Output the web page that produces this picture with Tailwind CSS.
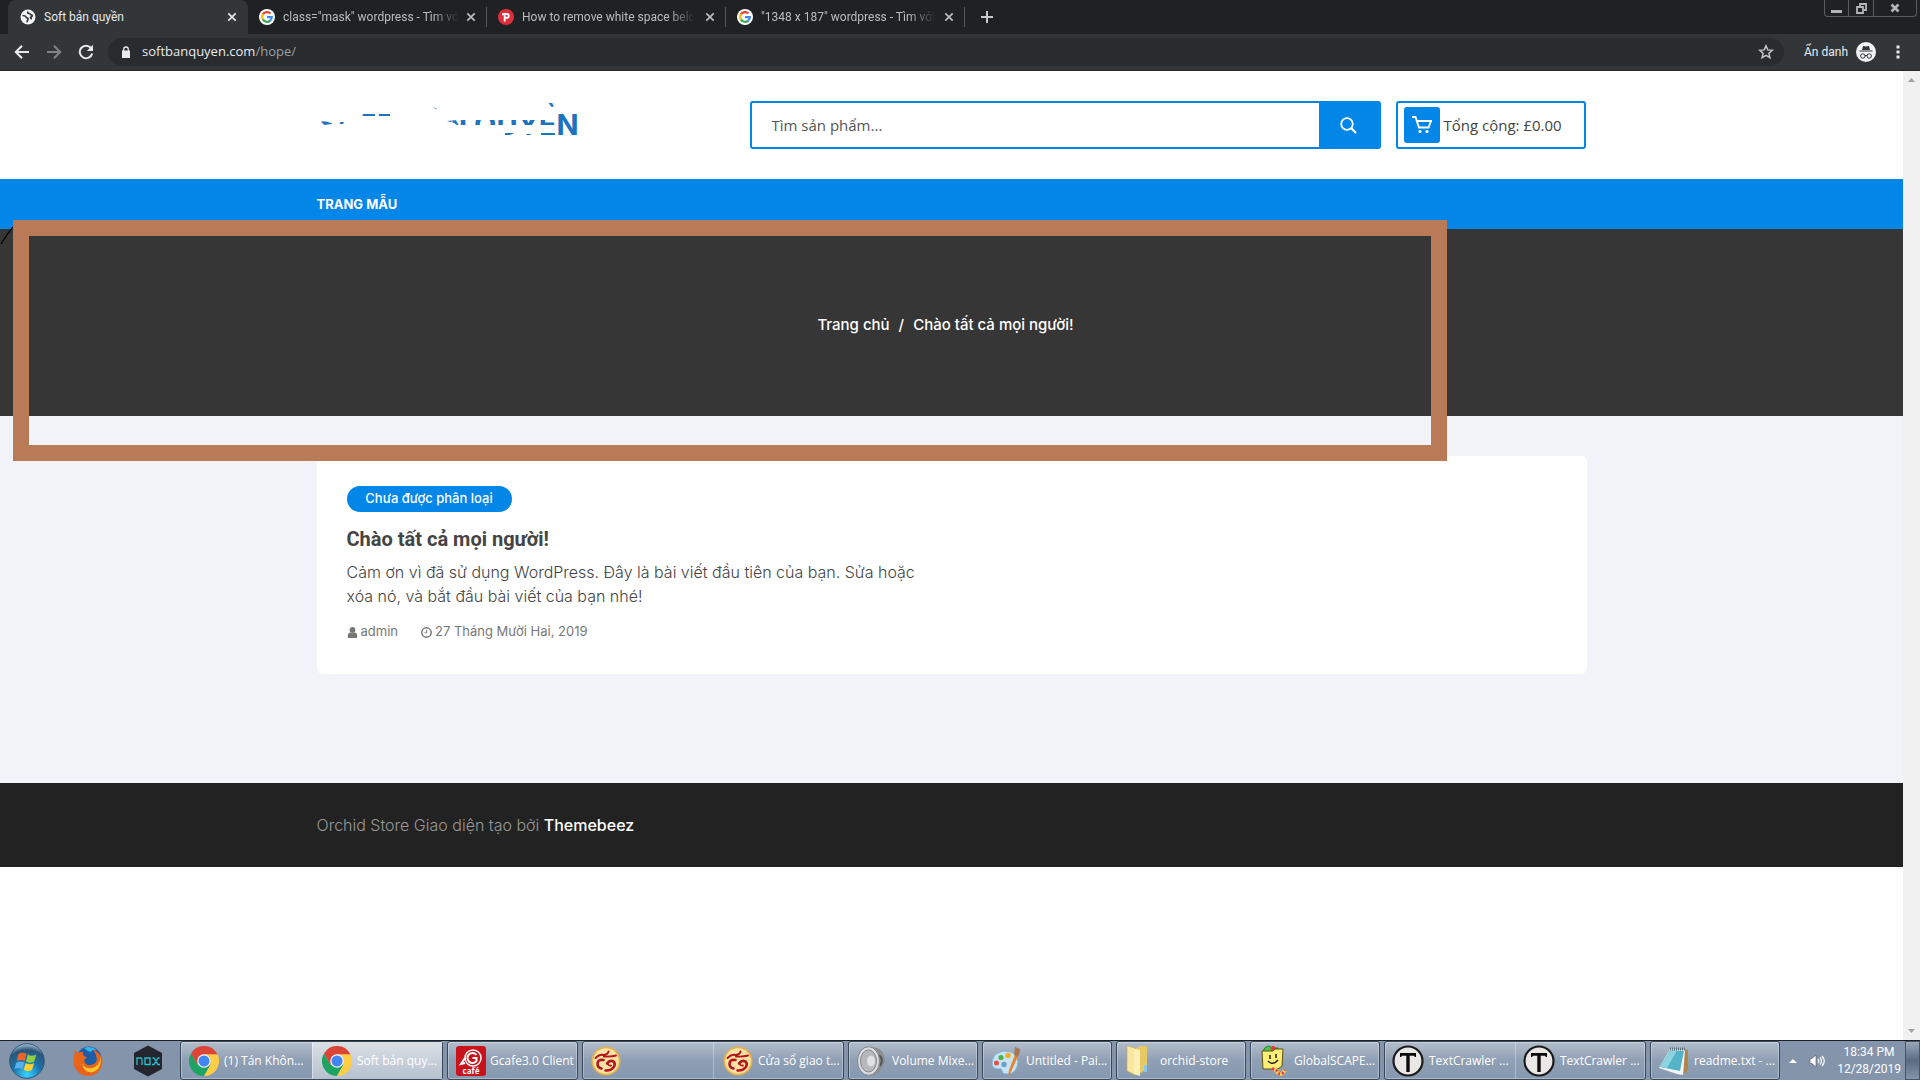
<!DOCTYPE html>
<html lang="vi">
<head>
<meta charset="utf-8">
<title>Soft bản quyền</title>
<script src="https://cdn.jsdelivr.net/npm/@tailwindcss/browser@4"></script>
</head>
<body class="flex h-screen flex-col overflow-hidden bg-white font-['Open_Sans',sans-serif]">

<!-- Shared icon symbols -->
<svg width="0" height="0" class="absolute" aria-hidden="true">
  <defs>
    <symbol id="x" viewBox="0 0 10 10"><path d="M1.3 1.3l7.4 7.4M8.7 1.3L1.3 8.7" stroke="currentColor" stroke-width="1.7" fill="none"/></symbol>
    <symbol id="google" viewBox="0 0 16 16"><circle cx="8" cy="8" r="8" fill="#fff"/><g fill="none" stroke-width="2.2"><path d="M3.9 5.4A4.8 4.8 0 0 1 11.5 4.6" stroke="#ea4335"/><path d="M3.9 10.6a4.9 4.9 0 0 1 0-5.2" stroke="#fbbc05"/><path d="M11.3 11.6A4.8 4.8 0 0 1 3.9 10.4" stroke="#34a853"/><path d="M8 8.1h4.8a4.8 4.8 0 0 1-1.6 3.6" stroke="#4285f4"/></g></symbol>
    <symbol id="chrome" viewBox="0 0 30 30"><path d="M2 7.500A15 15 0 0 0 15 30L21.500 18.700 15 15 8.500 18.700z" fill="#1da362"/><path d="M28.500 8.300A15 15 0 0 1 15 30L21.500 18.700 21 10.500 15 8z" fill="#ffcd46"/><path d="M2 7.500A15 15 0 0 1 28 7.500L28.500 8.300H15L8.500 18.700z" fill="#db4437"/><circle cx="15" cy="15" r="6.800" fill="#f1f1f1"/><circle cx="15" cy="15" r="5.500" fill="#4285f4"/></symbol>
    <symbol id="garena" viewBox="0 0 30 30"><circle cx="15" cy="15" r="14.500" fill="#e8b04a"/><circle cx="15" cy="15" r="12.800" fill="#fbe3a6"/><g fill="none" stroke="#b3161c" stroke-linecap="round"><path d="M4.500 12q4-4 8-3 4 0 5-3.500M13 10.500q7 .500 12-1" stroke-width="2"/><path d="M12.500 14q-6-1-6 4 0 3.500 4 4.500" stroke-width="2.600"/><path d="M16 17.500q3-4 6.500-2 2.500 2.500 0 6-3 3.500-8 3" stroke-width="2.600"/><path d="M16.500 17.500q1 2.500 3.500 2" stroke-width="1.800"/></g></symbol>
    <symbol id="textcrawler" viewBox="0 0 32 32"><circle cx="16" cy="16" r="14.500" fill="#e9e8e4" stroke="#1a1a1a" stroke-width="2.200"/><path d="M8 8h16v4h-1.200l-.800-1.300h-4.300V27h-3.400V10.700H10L9.200 12H8z" fill="#0b0b0b"/></symbol>
  </defs>
</svg>

<!-- Browser tab strip -->
<header class="shrink-0 border-b border-[#2a2426] bg-[#323639] font-['Roboto',sans-serif] text-xs">
  <div class="flex h-[34px] items-start justify-between bg-[#202124] pl-2">
    <nav class="flex h-[34px] items-center text-[#b9bcc0]" aria-label="Tabs">
      <div class="flex h-[34px] w-60 items-center rounded-t-lg bg-[#323639] pr-2 pl-3 text-[#e6e8ea]">
        <svg class="mr-2 size-4 shrink-0" viewBox="0 0 16 16"><circle cx="8" cy="8" r="7.500" fill="#f1f3f4"/><path d="M2.500 6.500c2 0 3 .3 3.500 1.500s2 .5 2 2-1 1.800-1 3.200M8 2.500c-1 1.500.5 2 1.500 2s.5 1.500 2 1.500.5 1.800-.5 2-.5 1.700 1 1.700" fill="none" stroke="#323639" stroke-width="1.700"/></svg>
        <span class="flex-1">Soft bản quyền</span>
        <button aria-label="Close" class="grid size-4 place-items-center"><svg class="size-[10px]"><use href="#x"/></svg></button>
      </div>
      <div class="flex h-5 w-[239px] items-center border-r border-[#55585b] pr-[7px] pl-[11px]">
        <svg class="mr-2 size-4 shrink-0"><use href="#google"/></svg>
        <span class="flex-1"><span class="mask-r-from-85% whitespace-nowrap">class="mask" wordpress - Tìm vớ</span></span>
        <button aria-label="Close" class="grid size-4 place-items-center"><svg class="size-[10px]"><use href="#x"/></svg></button>
      </div>
      <div class="flex h-5 w-[239px] items-center border-r border-[#55585b] pr-[7px] pl-[11px]">
        <svg class="mr-2 size-4 shrink-0" viewBox="0 0 16 16"><circle cx="8" cy="8" r="8" fill="#dd2f3b"/><path d="M6.700 12.500V5h2.200a1.800 1.800 0 0 1 0 3.800H6.700M4 5.200h3" fill="none" stroke="#fff" stroke-width="1.900"/></svg>
        <span class="flex-1"><span class="mask-r-from-85% whitespace-nowrap">How to remove white space belo</span></span>
        <button aria-label="Close" class="grid size-4 place-items-center"><svg class="size-[10px]"><use href="#x"/></svg></button>
      </div>
      <div class="flex h-5 w-[239px] items-center border-r border-[#55585b] pr-[7px] pl-[11px]">
        <svg class="mr-2 size-4 shrink-0"><use href="#google"/></svg>
        <span class="flex-1"><span class="mask-r-from-85% whitespace-nowrap">"1348 x 187" wordpress - Tìm với</span></span>
        <button aria-label="Close" class="grid size-4 place-items-center"><svg class="size-[10px]"><use href="#x"/></svg></button>
      </div>
      <button aria-label="New tab" class="ml-4"><svg class="size-3" viewBox="0 0 12 12"><path d="M6 0v12M0 6h12" stroke="#c7cacd" stroke-width="2"/></svg></button>
    </nav>
    <div class="mr-[3px] flex h-[17px] rounded-b border border-t-0 border-[#5b5c5f] text-[#b5b5b5]">
      <button aria-label="Minimize" class="grid w-6 place-items-center border-r border-[#5b5c5f]"><svg class="size-[11px]" viewBox="0 0 11 11"><path d="M0 7h11v3H0z" fill="currentColor"/></svg></button>
      <button aria-label="Restore" class="grid w-[25px] place-items-center border-r border-[#5b5c5f]"><svg class="size-[11px]" viewBox="0 0 11 11"><path d="M1 4h6v6H1zM4 3V1h6v6H8" fill="none" stroke="currentColor" stroke-width="1.800"/></svg></button>
      <button aria-label="Close window" class="grid w-[42px] place-items-center"><svg class="size-[10px]" viewBox="0 0 10 10"><path d="M1.500 1.500l7 7M8.500 1.500l-7 7" stroke="currentColor" stroke-width="2.600"/></svg></button>
    </div>
  </div>

  <!-- Toolbar -->
  <div class="flex h-9 items-center pl-[14px] text-[#e8eaed]">
    <button aria-label="Back"><svg class="size-4" viewBox="0 0 16 16"><path d="M15 8H2M8 1.800L1.800 8 8 14.200" fill="none" stroke="currentColor" stroke-width="2"/></svg></button>
    <button aria-label="Forward" class="ml-4 text-[#818487]"><svg class="size-4" viewBox="0 0 16 16"><path d="M1 8h13M8 1.800L14.200 8 8 14.200" fill="none" stroke="currentColor" stroke-width="2"/></svg></button>
    <button aria-label="Reload" class="ml-4"><svg class="size-4" viewBox="0 0 16 16"><path d="M13 4A6.300 6.300 0 1 0 14.200 9.500" fill="none" stroke="currentColor" stroke-width="2"/><path d="M15 .800V7H8.800z" fill="currentColor"/></svg></button>
    <div class="ml-[14px] flex h-7 flex-1 items-center rounded-full bg-[#282c2f] pr-[10px] pl-[14px]">
      <svg class="mr-3 h-3 w-2" viewBox="0 0 8 12"><path d="M0 4.500h8V12H0z" fill="#e8eaed"/><path d="M1.700 5V3.300a2.300 2.300 0 0 1 4.600 0V5" fill="none" stroke="#e8eaed" stroke-width="1.300"/></svg>
      <div class="flex-1 font-['Open_Sans',sans-serif] text-[13px]"><span>softbanquyen.com</span><span class="text-[#9aa0a6]">/hope/</span></div>
      <button aria-label="Bookmark"><svg class="size-4" viewBox="0 0 16 16"><path d="M8 1.800l1.800 4.100 4.500.4-3.400 3 1 4.400L8 11.400l-3.900 2.300 1-4.400-3.400-3 4.500-.4z" fill="none" stroke="#c4c7ca" stroke-width="1.500"/></svg></button>
    </div>
    <span class="ml-5">Ẩn danh</span>
    <svg class="ml-2 size-5" viewBox="0 0 20 20"><circle cx="10" cy="10" r="10" fill="#f1f3f4"/><path d="M7 4l3 .6L13 4l1 4H6zM3.500 8.600h13v1h-13z" fill="#323639"/><g fill="none" stroke="#323639"><circle cx="6.800" cy="14" r="2.200"/><circle cx="13.200" cy="14" r="2.200"/><path d="M9 13.700q1-.7 2 0"/></g></svg>
    <button aria-label="Menu" class="mr-5 ml-5"><svg class="h-[14px] w-1" viewBox="0 0 4 14"><path d="M.5.500h3v3h-3zM.5 5.500h3v3h-3zM.5 10.500h3v3h-3z" fill="currentColor"/></svg></button>
  </div>
</header>

<!-- Web page -->
<div class="relative flex min-h-0 flex-1">
  <div class="min-w-0 flex-1 font-['Inter',sans-serif]">
    <div class="h-[108px] bg-white">
      <div class="mx-auto flex h-full max-w-[1270px] items-center pr-px">
        <a href="#" class="relative block h-12 w-[433px] pl-[3px] text-[29px] leading-[48px] font-bold whitespace-nowrap text-[#1e73be]">SOFT BẢN QUYỀN
          <svg class="absolute inset-0 h-12 w-[433px]" viewBox="0 0 433 48"><path fill="#fff" fill-rule="evenodd" d="M-2 0H433V48H-2ZM2 20l12 1 1 2-8 1zM21 21h6l-1 2h-6zM45 13h13v2H45zM60 13h13v2H60zM115 2l6 3v4l-6-3zM130 20l10-1h100v5h-100l-3-2zM188 32h9v3h-9zM209 33h6v3h-6zM224 32h16v4h-16zM229 0l11 2v8l-11-5zM241 0h24v40h-24z"/></svg>
        </a>
        <form class="flex h-12 flex-1 overflow-hidden rounded-[3px] border-2 border-[#0286e7] bg-[#0286e7]">
          <input aria-label="Tìm sản phẩm" placeholder="Tìm sản phẩm..." class="min-w-0 flex-1 bg-white px-5 font-['Open_Sans',sans-serif] text-[15px] text-[#444] placeholder:text-[#555]">
          <button type="button" aria-label="Tìm" class="grid w-[60px] place-items-center text-white"><svg class="size-[17px]" viewBox="0 0 17 17"><circle cx="7" cy="7" r="5.800" fill="none" stroke="currentColor" stroke-width="1.800"/><path d="M11.300 11.300l4.700 4.700" stroke="currentColor" stroke-width="2.200"/></svg></button>
        </form>
        <a href="#" class="ml-[15px] flex h-12 w-[190px] items-center rounded-[3px] border-2 border-[#0286e7] pl-1.5 font-['Open_Sans',sans-serif] text-[15px] text-[#444]">
          <span class="mr-1 grid size-9 place-items-center rounded-[3px] bg-[#0286e7]"><svg class="size-5" viewBox="0 0 20 20"><path d="M0 2h3.500l3.500 10.500h9.500L19 6H5" fill="none" stroke="#fff" stroke-width="1.900"/><circle cx="8" cy="16.500" r="1.600" fill="#fff"/><circle cx="15" cy="16.500" r="1.600" fill="#fff"/></svg></span>
          <span>Tổng cộng: £0.00</span>
        </a>
      </div>
    </div>

    <nav class="h-[50px] bg-[#0286e7]">
      <div class="mx-auto flex h-full max-w-[1270px] items-center pt-0.5"><a href="#" class="text-[13px] font-bold text-white">TRANG MẪU</a></div>
    </nav>

    <div class="flex h-[187px] items-center justify-center bg-[#363636] pt-1.5 pr-3 text-[15px] font-medium text-white">
      <a href="#">Trang chủ</a><span class="mx-[9px]">/</span><span>Chào tất cả mọi người!</span>
    </div>

    <main class="h-[367px] bg-[#f1f3f8] pt-10">
      <article class="mx-auto max-w-[1270px] rounded-md bg-white px-[30px] pt-[30px] pb-8 text-[#444]">
        <a href="#" class="flex h-[26px] w-[165px] items-center justify-center rounded-full bg-[#0286e7] text-[13px] font-medium text-white">Chưa được phân loại</a>
        <h2 class="mt-3 font-['Roboto',sans-serif] text-xl leading-[30px] font-bold">Chào tất cả mọi người!</h2>
        <p class="mt-1.5 text-base leading-6 font-light">Cảm ơn vì đã sử dụng WordPress. Đây là bài viết đầu tiên của bạn. Sửa hoặc<br>xóa nó, và bắt đầu bài viết của bạn nhé!</p>
        <div class="mt-[14px] flex h-5 items-center text-[13px] text-[#777]">
          <svg class="mr-[3px] size-[11px]" viewBox="0 0 11 11"><circle cx="5.500" cy="3" r="2.900" fill="currentColor"/><path d="M1 11q-1-5 2-5.500 2.500 1.500 5 0 3 .5 2 5.500z" fill="currentColor"/></svg>
          <a href="#">admin</a>
          <svg class="mr-[3px] ml-[23px] size-[11px]" viewBox="0 0 11 11"><circle cx="5.500" cy="5.500" r="4.700" fill="none" stroke="currentColor" stroke-width="1.500"/><path d="M5.700 2.800v3H3.500" fill="none" stroke="currentColor"/></svg>
          <a href="#">27 Tháng Mười Hai, 2019</a>
        </div>
      </article>
    </main>

    <footer class="h-[84px] bg-[#222]">
      <p class="mx-auto flex h-full max-w-[1270px] items-center text-base text-[#999]"><span class="font-light">Orchid Store Giao diện tạo bởi&nbsp;</span><a href="#" class="font-medium text-white">Themebeez</a></p>
    </footer>
  </div>

  <div class="flex w-[17px] shrink-0 flex-col items-center justify-between bg-[#f1f1f1] py-[7px]">
    <svg class="h-1 w-[7px]" viewBox="0 0 7 4"><path d="M0 4L3.500 0 7 4z" fill="#a3a3a3"/></svg>
    <svg class="h-1 w-[7px]" viewBox="0 0 7 4"><path d="M0 0L3.500 4 7 0z" fill="#a3a3a3"/></svg>
  </div>

  <!-- Hand-drawn annotation over the page -->
  <svg class="absolute top-[155px] left-0 h-[19px] w-[14px]" viewBox="0 0 14 19"><path d="M1 18Q7 8 13 1" fill="none" stroke="#000" stroke-width="1.200"/></svg>
  <div class="pointer-events-none absolute top-[149px] left-[13px] h-[241px] w-[1434px] border-16 border-[#b97a57]"></div>
</div>

<!-- Windows taskbar -->
<footer class="flex h-10 shrink-0 items-center border-t border-[#1a222c] bg-[#8394ab] text-xs text-white">
  <button aria-label="Start" class="ml-[9px]"><svg class="size-9" viewBox="0 0 36 36"><defs><radialGradient id="orb" cx=".5" cy=".9" r=".9"><stop offset="0" stop-color="#35d6ff"/><stop offset=".45" stop-color="#1b74ad"/><stop offset=".8" stop-color="#2b5578"/><stop offset="1" stop-color="#a9c6da"/></radialGradient></defs><circle cx="18" cy="18" r="17.300" fill="url(#orb)" stroke="#35597a"/><path d="M9.500 11q4-2.500 8 0l-1.800 7q-4-2-8 0z" fill="#f0642a"/><path d="M18.800 11.500q4 2.500 8.500 0l-2 7q-4 2.500-8.300 0z" fill="#8fcf42"/><path d="M7.300 19.500q4-2.200 8 0l-1.800 6.500q-4-2-8 0z" fill="#57aef0"/><path d="M16.600 20q4 2.500 8.400 0l-2 7q-4 2.300-8.300 0z" fill="#fdd032"/></svg></button>
  <button aria-label="Firefox" class="ml-[27px]"><svg class="size-8" viewBox="0 0 32 32"><circle cx="17" cy="14" r="12.500" fill="#1c5fa8"/><path d="M12 3q7-3 13 2-5-1-6 2-4-1-7-4z" fill="#35b3e8"/><path d="M2 5l4 3q3-2 5-1-1 4 4 5.500l-3 2.500q1 6 7 5 8-2 5-10l-3-6q8 4 9.500 12A14.500 14.500 0 1 1 1.500 17Q1 11 3 9z" fill="#e8641b"/><path d="M10 18q4 8 13 4 6-4 5-11 3 12-7 16-9 2-11-9z" fill="#ffc42e"/></svg></button>
  <button aria-label="Nox" class="ml-[29px]"><svg class="h-8 w-[30px]" viewBox="0 0 30 32"><path d="M15 .5L29 8v16l-14 7.500L1 24V8z" fill="#24252e"/><path d="M4 20v-7h4l1 1v6M12 13h5v6.500h-5zM19.500 13h1.500l4 6.500h2M26.500 13H25l-4 6.500h-2" fill="none" stroke="#21c4cf" stroke-width="1.300"/></svg></button>

  <div class="ml-[17px] flex h-[39px] gap-1 text-left">
    <div class="flex rounded-[3px] border border-[#3b4858] bg-[#8d9db3] bg-linear-to-b from-[#b3becc] via-[#8f9fb4] to-[#8699b0] ring-1 ring-white/30 ring-inset">
      <button class="flex w-[131px] items-center pl-2"><svg class="mr-[5px] size-[30px]"><use href="#chrome"/></svg><span>(1) Tán Khôn...</span></button>
      <button class="flex w-[130px] items-center border-l border-white/40 bg-linear-to-b from-[#dbe0e6] to-[#b5c1cf] pl-[9px]"><svg class="mr-[5px] size-[30px]"><use href="#chrome"/></svg><span>Soft bản quy...</span></button>
    </div>
    <button class="flex w-[131px] items-center rounded-[3px] border border-[#3b4858] bg-linear-to-b from-[#b3becc] via-[#8f9fb4] to-[#8699b0] pl-2 ring-1 ring-white/30 ring-inset"><svg class="mr-1 size-[30px]" viewBox="0 0 30 30"><rect width="30" height="30" rx="3" fill="#c9131a"/><circle cx="17" cy="12" r="8" fill="none" stroke="#fff" stroke-width="1.500"/><path d="M20.500 9a5 5 0 1 0 0 6v-3h-4M9 17l-4 1 4-6" fill="none" stroke="#fff" stroke-width="2"/><text x="15" y="28" text-anchor="middle" font-size="8" font-weight="700" fill="#fff">café</text></svg><span>Gcafe3.0 Client</span></button>
    <div class="flex rounded-[3px] border border-[#3b4858] bg-linear-to-b from-[#b3becc] via-[#8f9fb4] to-[#8699b0] ring-1 ring-white/30 ring-inset">
      <button aria-label="Garena" class="flex w-[130px] items-center pl-2"><svg class="size-[30px]"><use href="#garena"/></svg></button>
      <button class="flex w-[130px] items-center border-l border-white/30 pl-[9px]"><svg class="mr-[5px] size-[30px]"><use href="#garena"/></svg><span>Cửa sổ giao t...</span></button>
    </div>
    <button class="flex w-[130px] items-center rounded-[3px] border border-[#3b4858] bg-linear-to-b from-[#b3becc] via-[#8f9fb4] to-[#8699b0] pl-2 ring-1 ring-white/30 ring-inset"><svg class="mr-[5px] size-[30px]" viewBox="0 0 30 30"><path d="M12 1q14-1 16 12 0 9-10 16l-8 0z" fill="#8b8f94"/><path d="M22 9q5 4 1 11" fill="none" stroke="#555" stroke-width="2"/><ellipse cx="11.500" cy="15" rx="11" ry="14.300" fill="#d9dbde" stroke="#83878c"/><ellipse cx="11.500" cy="15" rx="8" ry="11" fill="#b5b8bc" stroke="#888"/><ellipse cx="14" cy="15" rx="4" ry="5.500" fill="#dfe1e3"/></svg><span>Volume Mixe...</span></button>
    <button class="flex w-[130px] items-center rounded-[3px] border border-[#3b4858] bg-linear-to-b from-[#b3becc] via-[#8f9fb4] to-[#8699b0] pl-2 ring-1 ring-white/30 ring-inset"><svg class="mr-[5px] h-8 w-[30px]" viewBox="0 0 30 32"><path d="M1 20Q0 8 13 6q14 0 14 11-1 12-11 12-5 0-5-3t-4-2q-5 0-6-4z" fill="#c5e4f5" stroke="#78b0d4"/><circle cx="5.500" cy="18" r="2.500" fill="#e05348"/><circle cx="10" cy="12.500" r="2.600" fill="#54b04a"/><circle cx="17" cy="10.500" r="2.800" fill="#f5b229"/><circle cx="13" cy="19.500" r="2.700" fill="#6f9fc4"/><path d="M17 31l1-6 6-15 3 1-7 16z" fill="#e8832e"/><path d="M23 10l1-8 5 2q0 5-3 8z" fill="#a97750"/></svg><span>Untitled - Pai...</span></button>
    <button class="flex w-[130px] items-center rounded-[3px] border border-[#3b4858] bg-linear-to-b from-[#b3becc] via-[#8f9fb4] to-[#8699b0] pl-2 ring-1 ring-white/30 ring-inset"><svg class="mr-[5px] h-8 w-[30px]" viewBox="0 0 30 32"><path d="M2 1l8 2v27l-8-4z" fill="#f7e7a0" stroke="#cda93d" stroke-width=".6"/><path d="M10 4l5-3h7v23l-9 6-3 0z" fill="#e7c964"/><path d="M9 4l6 1v26l-6-2z" fill="#fdf0b6"/><path d="M19 20h3v7h-3z" fill="#8cc9ed"/></svg><span>orchid-store</span></button>
    <button class="flex w-[130px] items-center rounded-[3px] border border-[#3b4858] bg-linear-to-b from-[#b3becc] via-[#8f9fb4] to-[#8699b0] pl-2 ring-1 ring-white/30 ring-inset"><svg class="mr-[5px] h-8 w-[30px]" viewBox="0 0 30 32"><path d="M4 6q4-8 9-3h6v5H4z" fill="#4bc752" stroke="#237a2b"/><circle cx="14" cy="3.500" r="2.500" fill="#e03b3b"/><path d="M3 6l11 0 2-2h8l-1 17-4 3H4z" fill="#ffee75" stroke="#5e5210"/><path d="M11 10v4M17 9v4M9 16q5 5 10-1" fill="none" stroke="#222" stroke-width="1.500"/><path d="M13 24q5 0 6 4 4 3 7-3" fill="none" stroke="#f3cf4d" stroke-width="4"/><path d="M13 24q5 0 6 4 4 3 7-3" fill="none" stroke="#e23b6b" stroke-width="3" stroke-dasharray="2 2"/></svg><span>GlobalSCAPE...</span></button>
    <div class="flex rounded-[3px] border border-[#3b4858] bg-linear-to-b from-[#b3becc] via-[#8f9fb4] to-[#8699b0] ring-1 ring-white/30 ring-inset">
      <button class="flex w-[130px] items-center pl-[7px]"><svg class="mr-[5px] size-8"><use href="#textcrawler"/></svg><span>TextCrawler ...</span></button>
      <button class="flex w-[130px] items-center border-l border-white/30 pl-[7px]"><svg class="mr-[5px] size-8"><use href="#textcrawler"/></svg><span>TextCrawler ...</span></button>
    </div>
    <button class="flex w-[130px] items-center rounded-[3px] border border-[#3b4858] bg-linear-to-b from-[#b3becc] via-[#8f9fb4] to-[#8699b0] pl-2 ring-1 ring-white/30 ring-inset"><svg class="mr-[5px] size-[30px]" viewBox="0 0 30 30"><path d="M25 3l4 1v20l-4 4z" fill="#b1864b"/><path d="M11 3l15 1-2 25-6-1L0 22z" fill="#f2f6f7"/><path d="M11 4l14 1-4 20-20-4z" fill="#54b3c6"/><path d="M11 4l7 .5L8 22l-7-1z" fill="#8bd3df"/><path d="M11 3h15" stroke="#60707a" stroke-width="3" stroke-dasharray="1 1"/></svg><span>readme.txt - ...</span></button>
  </div>

  <div class="ml-auto flex h-full items-center">
    <svg class="h-[6px] w-2" viewBox="0 0 8 6"><path d="M0 5L4 1l4 4z" fill="#fff"/></svg>
    <svg class="mr-3 ml-3 h-[14px] w-4" viewBox="0 0 16 14"><path d="M1 4.500h2L7 1v12L3 9.500H1z" fill="#fff" stroke="#4a5868" stroke-width=".6"/><path d="M9 5q1.500 2 0 4M11 3.500q3 3.500 0 7M13 2q4.500 5 0 10" fill="none" stroke="#fff" stroke-width="1.200"/></svg>
    <time class="mr-1 text-center font-['Roboto',sans-serif] leading-[17px]">18:34 PM<br>12/28/2019</time>
    <button aria-label="Show desktop" class="h-full w-[15px] border border-[#46566a] bg-linear-to-b from-[#9aa8b9] via-[#5b6c82] to-[#8496ab]"></button>
  </div>
</footer>
</body>
</html>
